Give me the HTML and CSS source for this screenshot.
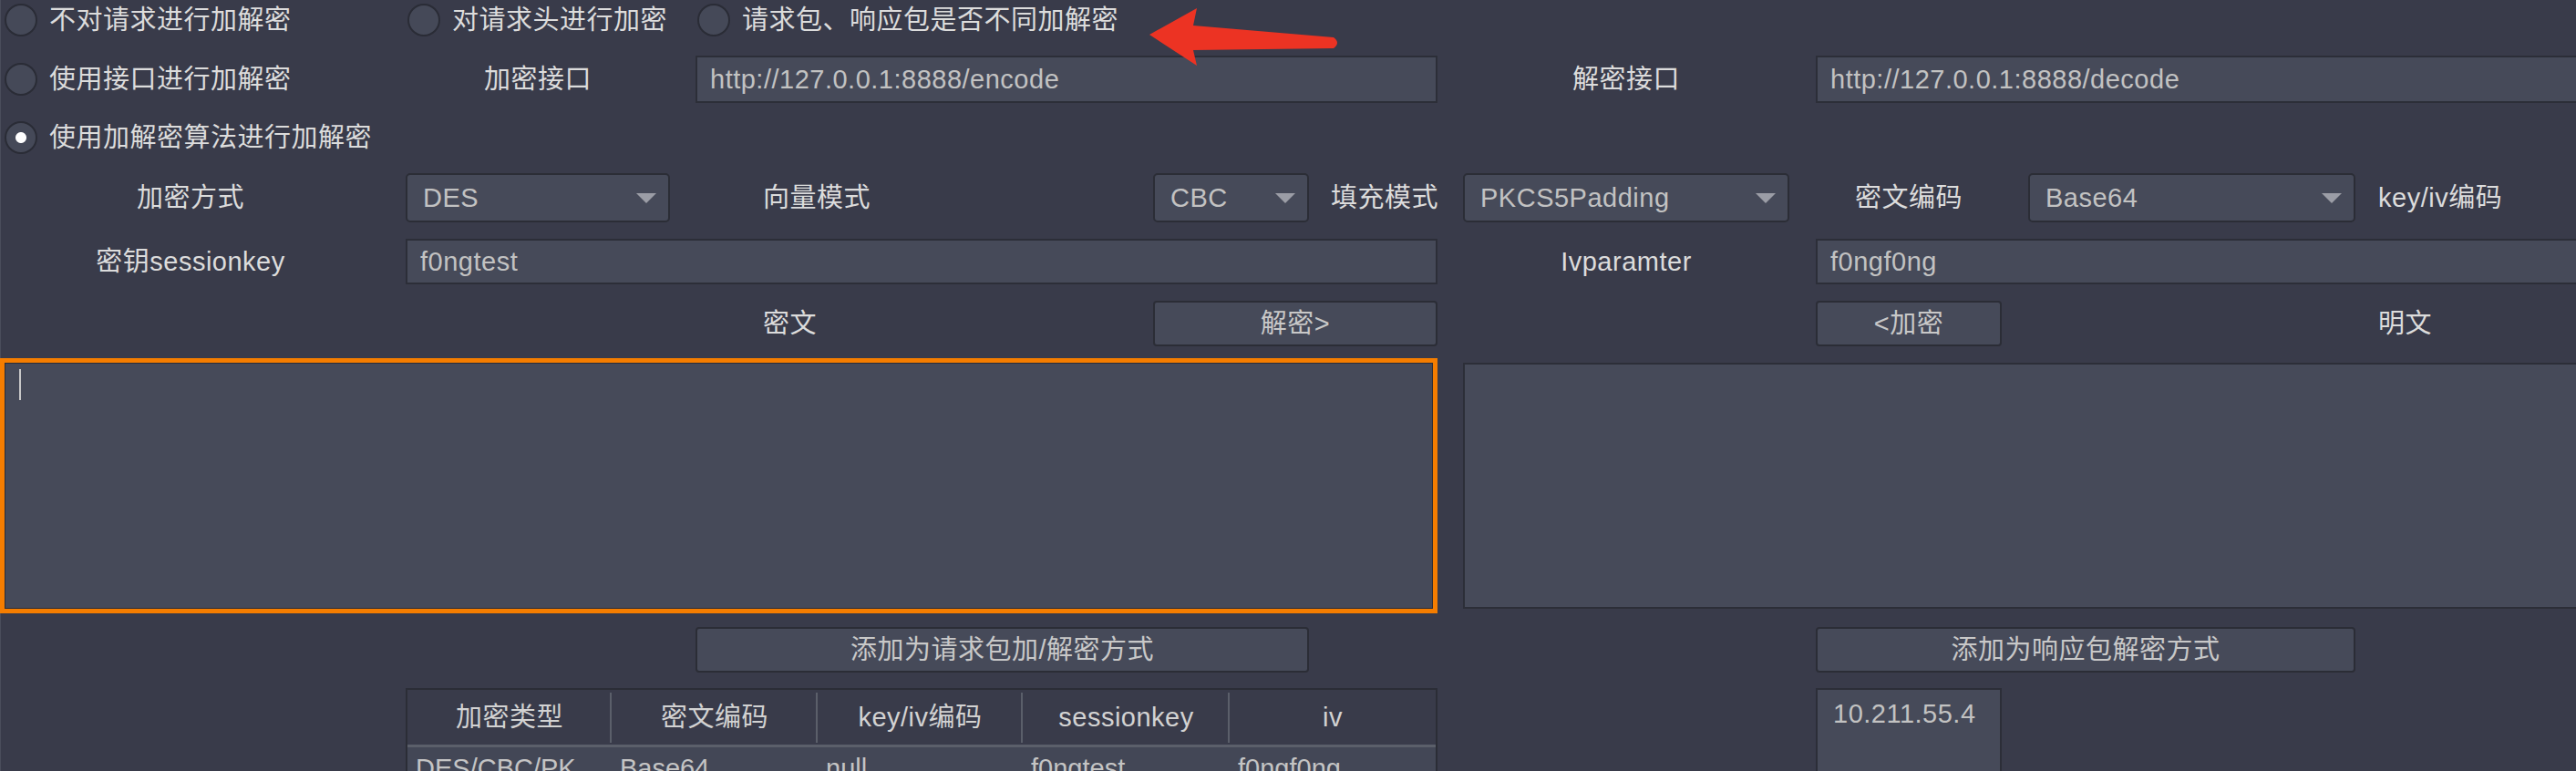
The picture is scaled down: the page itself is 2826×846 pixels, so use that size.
FILE: index.html
```html
<!DOCTYPE html>
<html lang="zh-CN">
<head>
    <meta charset="UTF-8">
    <title>加解密设置</title>
    <link rel="stylesheet" href="styles.css">
</head>
<body>

<div class="page">

    <div class="row row-mode">
        <label class="radio edge from-1 to-2"><span class="dot"></span>不对请求进行加解密</label>
        <label class="radio from-2 to-4"><span class="dot"></span>对请求头进行加密</label>
        <label class="radio from-4 to-9"><span class="dot"></span>请求包、响应包是否不同加解密</label>
    </div>

    <div class="row row-api">
        <label class="radio edge from-1 to-2"><span class="dot"></span>使用接口进行加解密</label>
        <span class="label center from-2 to-3">加密接口</span>
        <div class="field from-4 to-8">http://127.0.0.1:8888/encode</div>
        <span class="label center from-9 to-10">解密接口</span>
        <div class="field from-11 to-16">http://127.0.0.1:8888/decode</div>
    </div>

    <div class="row row-algo">
        <label class="radio edge from-1 to-4"><span class="dot checked"></span>使用加解密算法进行加解密</label>
    </div>

    <div class="row row-options">
        <span class="label center first from-1 to-2">加密方式</span>
        <div class="select from-2 to-3">DES<svg width="22" height="11" viewBox="0 0 22 11"><polygon points="0,0 22,0 11,11"/></svg></div>
        <span class="label indent from-4 to-5">向量模式</span>
        <div class="select from-5 to-6">CBC<svg width="22" height="11" viewBox="0 0 22 11"><polygon points="0,0 22,0 11,11"/></svg></div>
        <span class="label center from-7 to-8">填充模式</span>
        <div class="select from-9 to-10">PKCS5Padding<svg width="22" height="11" viewBox="0 0 22 11"><polygon points="0,0 22,0 11,11"/></svg></div>
        <span class="label center from-11 to-12">密文编码</span>
        <div class="select from-13 to-14">Base64<svg width="22" height="11" viewBox="0 0 22 11"><polygon points="0,0 22,0 11,11"/></svg></div>
        <span class="label from-15 to-16">key/iv编码</span>
    </div>

    <div class="row row-keys">
        <span class="label center first from-1 to-2">密钥sessionkey</span>
        <div class="field from-2 to-8">f0ngtest</div>
        <span class="label center from-9 to-10">Ivparamter</span>
        <div class="field from-11 to-16">f0ngf0ng</div>
    </div>

    <div class="row row-actions">
        <span class="label indent from-4 to-5">密文</span>
        <button class="button from-5 to-8">解密&gt;</button>
        <button class="button from-11 to-12">&lt;加密</button>
        <span class="label from-15 to-16">明文</span>
    </div>

    <div class="row row-editors">
        <div class="editor focused from-1 to-8"><span class="caret"></span></div>
        <div class="editor inset from-9 to-16"></div>
    </div>

    <div class="row row-add">
        <button class="button from-4 to-6">添加为请求包加/解密方式</button>
        <button class="button from-11 to-14">添加为响应包解密方式</button>
    </div>

    <div class="row row-lists">
        <table class="rules from-2 to-8">
            <thead>
                <tr>
                    <th class="w1">加密类型</th>
                    <th class="w2">密文编码</th>
                    <th class="w3">key/iv编码</th>
                    <th class="w4">sessionkey</th>
                    <th class="last">iv</th>
                </tr>
            </thead>
            <tbody>
                <tr>
                    <td>DES/CBC/PKCS5Padding</td>
                    <td>Base64</td>
                    <td>null</td>
                    <td>f0ngtest</td>
                    <td>f0ngf0ng</td>
                </tr>
            </tbody>
        </table>
        <div class="hosts from-11 to-12">10.211.55.4</div>
    </div>

    <!-- red arrow drawn over the screenshot -->
    <svg class="annotation" width="1480" height="80" viewBox="0 0 1480 80">
        <path d="M1261 38 L1313 9 L1309 28 L1463 41 Q1471 47 1463 53 L1309 55 L1313 72 Z"/>
    </svg>

</div>

</body>
</html>
```

FILE: styles.css
```css
body {
    margin: 0;
    background-color: #393b4a;
    color: #dcdcdc;
    font-family: "Liberation Sans", "Noto Sans CJK SC", sans-serif;
    font-size: 29px;
    letter-spacing: 0.5px;
    line-height: 1.2;
    overflow: hidden;
}
.page {
    position: relative;
    display: flex;
    flex-direction: column;
    width: 2869px;
    height: 846px;
    box-shadow: inset 1px 0 #4a4d5b;
}
.row {
    display: grid;
    grid-template-columns: 445px 290px 28px 502px 171px 24px 117px 28px 358px 29px 204px 29px 359px 25px 260px;
    align-items: center;
    flex-shrink: 0;
}
.row-mode { height: 44px; }
.row-api { height: 52px; margin-top: 17px; }
.row-algo { height: 42px; margin-top: 17px; }
.row-options { height: 54px; margin-top: 18px; }
.row-keys { height: 50px; margin-top: 18px; }
.row-actions { height: 50px; margin-top: 18px; }
.row-editors { height: 280px; margin-top: 13px; }
.row-add { height: 50px; margin-top: 15px; }
.row-lists { margin-top: 17px; align-items: start; }

.from-1 { grid-column-start: 1; }
.from-2 { grid-column-start: 2; }
.from-4 { grid-column-start: 4; }
.from-5 { grid-column-start: 5; }
.from-7 { grid-column-start: 7; }
.from-9 { grid-column-start: 9; }
.from-11 { grid-column-start: 11; }
.from-13 { grid-column-start: 13; }
.from-15 { grid-column-start: 15; }
.to-2 { grid-column-end: 2; }
.to-3 { grid-column-end: 3; }
.to-4 { grid-column-end: 4; }
.to-5 { grid-column-end: 5; }
.to-6 { grid-column-end: 6; }
.to-8 { grid-column-end: 8; }
.to-9 { grid-column-end: 9; }
.to-10 { grid-column-end: 10; }
.to-12 { grid-column-end: 12; }
.to-14 { grid-column-end: 14; }
.to-16 { grid-column-end: 16; }

/* radios */
.radio {
    display: flex;
    align-items: center;
    gap: 13px;
    padding-left: 2px;
    white-space: nowrap;
}
.radio.edge {
    padding-left: 5px;
}
.dot {
    width: 32px;
    height: 32px;
    border: 2px solid #2a2c36;
    border-radius: 50%;
    background: #454958;
    flex-shrink: 0;
}
.dot.checked {
    background: radial-gradient(circle, #ffffff 0 5.5px, #454958 6.5px);
}

/* labels */
.label {
    white-space: nowrap;
}
.label.center {
    text-align: center;
}
.label.first {
    padding-right: 27px;
}
.label.indent {
    padding-left: 74px;
}

/* inputs */
.field, .select, .button, .editor, .hosts {
    background-color: #464a59;
    color: #c2c2c2;
    box-sizing: border-box;
}
.field {
    align-self: stretch;
    display: flex;
    align-items: center;
    padding-left: 14px;
    border: 2px solid #2c2e38;
    white-space: nowrap;
}
.select {
    align-self: stretch;
    display: flex;
    align-items: center;
    justify-content: space-between;
    padding: 0 13px 0 17px;
    border: 2px solid #2b2d36;
    border-radius: 5px;
}
.select svg {
    fill: #9b9da6;
}
.button {
    align-self: stretch;
    border: 2px solid #2b2d36;
    border-radius: 4px;
    font: inherit;
    letter-spacing: inherit;
    color: #c8c8c8;
    padding: 0;
}
.editor {
    align-self: stretch;
}
.editor.focused {
    border: 5px solid #f57d00;
    box-shadow: inset 0 0 0 1px #2b2d36;
    padding: 7px 0 0 16px;
}
.editor.inset {
    margin: 5px 0;
    border: 2px solid #2c2e38;
    border-right: none;
}
.caret {
    display: block;
    width: 2px;
    height: 34px;
    background-color: #c8c8c8;
}

/* table */
.rules {
    table-layout: fixed;
    border-collapse: separate;
    border-spacing: 0;
    border: 2px solid #2b2d36;
    width: 1132px;
}
.rules th {
    height: 60px;
    padding: 0;
    font-weight: normal;
    color: #d2d2d2;
    text-align: center;
    border-bottom: 3px solid #5b5f6a;
    background: linear-gradient(#5b5f6a, #5b5f6a) right 0 top 3px / 2px 55px no-repeat, #393b4a;
}
.rules th.last {
    background: #393b4a;
}
.rules .w1 { width: 224px; }
.rules .w2 { width: 226px; }
.rules .w3 { width: 225px; }
.rules .w4 { width: 227px; }
.rules td {
    padding: 6px 4px 10px 9px;
    background-color: #434756;
    color: #c4c4c4;
    letter-spacing: 0;
    white-space: nowrap;
    overflow: hidden;
    text-overflow: ellipsis;
}
.hosts {
    height: 150px;
    border: 2px solid #2c2e38;
    padding: 9px 0 0 17px;
}

.annotation {
    position: absolute;
    left: 0;
    top: 0;
    fill: #ec3323;
    pointer-events: none;
}
```
